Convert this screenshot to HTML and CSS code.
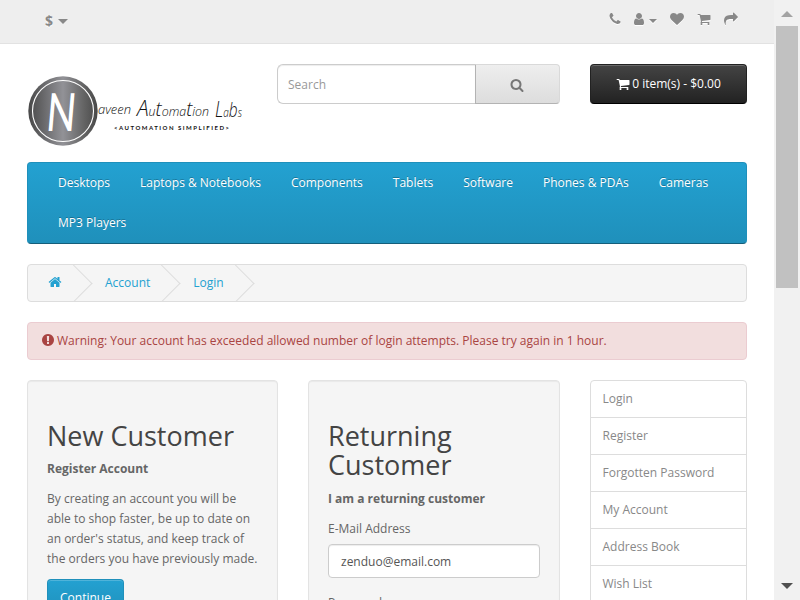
FILE: index.html
```html
<!DOCTYPE html>
<html lang="en">
<head>
<meta charset="utf-8">
<title>Account Login</title>
<link rel="stylesheet" href="styles.css">
</head>
<body>
<svg class="defs" aria-hidden="true">
  <symbol id="phone" viewBox="0 0 1792 1792"><path d="M1600 1240q0 27-10 70.5t-21 68.5q-21 50-122 106-94 51-186 51-27 0-53-3.5t-57.5-12.5-47-14.5-55.5-20.5-49-18q-98-35-175-83-127-79-264-216t-216-264q-48-77-83-175-3-9-18-49t-20.5-55.5-14.5-47-12.5-57.5-3.5-53q0-92 51-186 56-101 106-122 25-11 68.500-21t70.500-10q14 0 21 3 18 6 53 76 11 19 30 54t35 63.500 31 53.500q3 4 17.500 25t21.500 35.500 7 28.500q0 20-28.500 50t-62 55-62 53-28.500 46q0 9 5 22.500t8.500 20.500 14 24 11.500 19q76 137 174 235t235 174q2 1 19 11.500t24 14 20.500 8.500 22.500 5q18 0 46-28.500t53-62 55-62 50-28.500q14 0 28.500 7t35.500 21.500 25 17.500q25 15 53.500 31t63.500 35 54 30q70 35 76 53 3 7 3 21z"/></symbol>
  <symbol id="user" viewBox="0 0 1792 1792"><path d="M1536 1399q0 109-62.5 187t-150.5 78h-854q-88 0-150.5-78t-62.5-187q0-85 8.500-160.500t31.500-152 58.500-131 94-89 134.500-34.500q131 128 313 128t313-128q76 0 134.500 34.500t94 89 58.500 131 31.500 152 8.500 160.500zm-256-887q0 159-112.500 271.500t-271.500 112.500-271.500-112.500-112.500-271.500 112.500-271.500 271.500-112.500 271.500 112.500 112.500 271.500z"/></symbol>
  <symbol id="heart" viewBox="0 0 1792 1792"><path d="M896 1664q-26 0-44-18l-624-602q-10-8-27.500-26t-55.500-65.500-68-97.500-53.500-121-23.500-138q0-220 127-344t351-124q62 0 126.500 21.500t120 58 95.500 68.500 76 68q36-36 76-68t95.500-68.500 120-58 126.500-21.500q224 0 351 124t127 344q0 221-229 450l-623 600q-18 18-44 18z"/></symbol>
  <symbol id="cart" viewBox="0 0 1792 1792"><path d="M704 1536q0 52-38 90t-90 38-90-38-38-90 38-90 90-38 90 38 38 90zm896 0q0 52-38 90t-90 38-90-38-38-90 38-90 90-38 90 38 38 90zm128-1088v512q0 24-16.500 42.500t-40.500 21.500l-1044 122q13 60 13 70 0 16-24 64h920q26 0 45 19t19 45-19 45-45 19h-1024q-26 0-45-19t-19-45q0-11 8-31.500t16-36 21.500-40 15.500-29.500l-177-823h-204q-26 0-45-19t-19-45 19-45 45-19h256q16 0 28.500 6.500t19.500 15.500 13 24.500 8 26 5.500 29.500 4.500 26h1201q26 0 45 19t19 45z"/></symbol>
  <symbol id="share" viewBox="0 0 1792 1792"><path d="M1792 640q0 26-19 45l-512 512q-19 19-45 19t-45-19-19-45v-256h-224q-98 0-175.500 6t-154 21.500-133 42.500-105.500 69.500-80 101-48.500 138.500-17.500 181q0 55 5 123 0 6 2.500 23.500t2.500 26.500q0 15-8.500 25t-23.500 10q-16 0-28-17-7-9-13-22t-13.500-30-10.500-24q-127-285-127-451 0-199 53-333 162-403 875-403h224v-256q0-26 19-45t45-19 45 19l512 512q19 19 19 45z"/></symbol>
  <symbol id="search" viewBox="0 0 1792 1792"><path d="M1216 832q0-185-131.500-316.500t-316.500-131.500-316.500 131.500-131.500 316.500 131.500 316.500 316.500 131.500 316.500-131.500 131.500-316.500zm512 832q0 52-38 90t-90 38q-54 0-90-38l-343-342q-179 124-399 124-143 0-273.500-55.500t-225-150-150-225-55.500-273.500 55.500-273.500 150-225 225-150 273.500-55.500 273.500 55.500 225 150 150 225 55.500 273.500q0 220-124 399l343 343q37 37 37 90z"/></symbol>
  <symbol id="home" viewBox="0 0 1792 1792"><path d="M1472 992v480q0 26-19 45t-45 19h-384v-384h-256v384h-384q-26 0-45-19t-19-45v-480q0-1 .5-3t.5-3l575-474 575 474q1 2 1 6zm223-69l-62 74q-8 9-21 11h-3q-13 0-21-7l-692-577-692 577q-12 8-24 7-13-2-21-11l-62-74q-8-10-7-23.500t11-21.500l719-599q32-26 76-26t76 26l244 204v-195q0-14 9-23t23-9h192q14 0 23 9t9 23v408l219 182q10 8 11 21.500t-7 23.500z"/></symbol>
  <symbol id="alert" viewBox="0 0 1792 1792"><path d="M896 128q209 0 385.500 103t279.500 279.500 103 385.500-103 385.500-279.500 279.500-385.500 103-385.500-103-279.500-279.500-103-385.500 103-385.500 279.500-279.500 385.500-103zm128 1247v-190q0-14-9-23.500t-22-9.500h-192q-13 0-23 10t-10 23v190q0 13 10 23t23 10h192q13 0 22-9.500t9-23.500zm-2-344l18-621q0-12-10-18-10-8-24-8h-220q-14 0-24 8-10 6-10 18l18 621q0 10 10 17.500t24 7.500h185q14 0 23.500-7.500t10.500-17.500z"/></symbol>
</svg>
<div class="page">
  <nav class="top">
    <div class="currency"><strong>$</strong><i class="caret"></i></div>
    <ul class="links">
      <li><svg class="icon"><use href="#phone"/></svg></li>
      <li><svg class="icon"><use href="#user"/></svg><i class="caret small"></i></li>
      <li><svg class="icon"><use href="#heart"/></svg></li>
      <li><svg class="icon"><use href="#cart"/></svg></li>
      <li><svg class="icon"><use href="#share"/></svg></li>
    </ul>
  </nav>
  <header class="header">
    <svg class="logo" width="220" height="74" viewBox="0 0 220 74">
      <defs><linearGradient id="metal"><stop offset="0" stop-color="#484848"/><stop offset=".5" stop-color="#929297"/><stop offset=".8" stop-color="#646464"/><stop offset="1" stop-color="#484848"/></linearGradient></defs>
      <circle cx="36" cy="37" r="34.700" fill="url(#metal)"/>
      <circle cx="36" cy="37" r="30.500" fill="none" stroke="#fff" stroke-width="1.100"/>
      <text class="initial" transform="translate(18.500 56) skewX(-5)" textLength="29" lengthAdjust="spacingAndGlyphs">N</text>
      <g class="script">
        <text x="71" y="40" textLength="33" lengthAdjust="spacingAndGlyphs">aveen</text>
        <text x="110" y="42" textLength="72" lengthAdjust="spacingAndGlyphs"><tspan class="cap">A</tspan>u<tspan class="tall">t</tspan>oma<tspan class="tall">t</tspan>ion</text>
        <text x="188" y="43" textLength="27" lengthAdjust="spacingAndGlyphs"><tspan class="cap">L</tspan>a<tspan class="tall">b</tspan>s</text>
      </g>
      <text class="tagline" x="87" y="56" textLength="115">&lt;AUTOMATION SIMPLIFIED&gt;</text>
    </svg>
    <div class="search">
      <div class="field">Search</div>
      <div class="go"><svg class="icon"><use href="#search"/></svg></div>
    </div>
    <div class="basket"><svg class="icon"><use href="#cart"/></svg>0 item(s) - $0.00</div>
  </header>
  <nav class="menu">
    <a>Desktops</a><a>Laptops &amp; Notebooks</a><a>Components</a><a>Tablets</a><a>Software</a><a>Phones &amp; PDAs</a><a>Cameras</a><a>MP3 Players</a>
  </nav>
  <ul class="breadcrumb">
    <li><svg class="icon"><use href="#home"/></svg></li>
    <li>Account</li>
    <li>Login</li>
  </ul>
  <div class="warning"><svg class="icon"><use href="#alert"/></svg>Warning: Your account has exceeded allowed number of login attempts. Please try again in 1 hour.</div>
  <main class="columns">
    <section class="well">
      <h2>New Customer</h2>
      <p><strong>Register Account</strong></p>
      <p>By creating an account you will be able to shop faster, be up to date on an order's status, and keep track of the orders you have previously made.</p>
      <a class="button">Continue</a>
    </section>
    <section class="well">
      <h2>Returning Customer</h2>
      <p><strong>I am a returning customer</strong></p>
      <label>E-Mail Address</label>
      <div class="input">zenduo@email.com</div>
      <label>Password</label>
    </section>
    <aside class="list">
      <a>Login</a><a>Register</a><a>Forgotten Password</a><a>My Account</a><a>Address Book</a><a>Wish List</a>
    </aside>
  </main>
</div>
<div class="scrollbar"><i class="up"></i><i class="thumb"></i><i class="down"></i></div>
</body>
</html>
```
FILE: styles.css
```css
* { box-sizing: border-box; }
html, body { height: 600px; overflow: hidden; }
body {
  margin: 0;
  display: flex;
  background: #fff;
  color: #666;
  font: 12px/20px "Open Sans", sans-serif;
}
.defs { position: absolute; width: 0; height: 0; }
ul { list-style: none; margin: 0; padding: 0; }
.icon { width: 14px; height: 14px; fill: currentColor; flex: none; display: block; }
.page { width: 774px; height: 600px; overflow: hidden; flex: none; }

.top {
  height: 44px;
  padding: 0 36px 0 45px;
  display: flex;
  justify-content: space-between;
  background: #eee;
  border-bottom: 1px solid #e2e2e2;
  color: #888;
  text-shadow: 0 1px 0 #fff;
}
.currency { display: flex; align-items: center; height: 41px; gap: 6px; font-size: 14px; }
.caret { border: 4.500px solid transparent; border-top-color: #888; border-bottom: 0; margin-top: 1px; }
.currency .caret { border-width: 5px 5px 0; margin-left: -1px; }
.caret.small { border-width: 4px 4px 0; margin: 3px 0 0 3px; }
.links { display: flex; height: 38px; align-items: center; }
.links li { display: flex; align-items: center; margin-left: 13px; filter: drop-shadow(0 1px 0 #fff); }
.links li:nth-child(2) { margin-left: 10px; }

.header { display: flex; height: 98px; margin: 20px 27px 0; }
.logo { margin: 10px 30px 0 0; flex: none; }
.initial { font: 300 50px "Open Sans", sans-serif; fill: #fff; stroke: #fff; stroke-width: 2; }
.script { font: italic 300 13px "Open Sans", sans-serif; fill: #111; }
.script .cap { font-size: 22px; }
.script .tall { font-size: 20px; }
.tagline { font: 700 6px Lato, sans-serif; fill: #111; }
.search { display: flex; width: 283px; height: 40px; }
.field {
  width: 198px;
  padding: 10px 10px 8px;
  border: 1px solid #ccc;
  border-right: 0;
  border-radius: 6px 0 0 6px;
  box-shadow: inset 0 1px 1px rgba(0,0,0,.075);
  color: #999;
}
.go {
  flex: 1;
  display: flex;
  align-items: center;
  justify-content: center;
  padding: 2px 2px 0 0;
  border: 1px solid #ccc;
  border-color: #d9d9d9 #d9d9d9 #b3b3b3 #b3b3b3;
  border-radius: 0 4px 4px 0;
  background: linear-gradient(#eee, #ddd);
  color: #777;
}
.basket {
  width: 157px;
  height: 40px;
  margin-left: 30px;
  display: flex;
  align-items: center;
  justify-content: center;
  gap: 2px;
  border: 1px solid;
  border-color: #222 #222 #000;
  border-radius: 4px;
  background: linear-gradient(#444, #222);
  box-shadow: inset 0 1px 0 rgba(255,255,255,.2);
  color: #fff;
}

.menu {
  display: flex;
  flex-wrap: wrap;
  height: 82px;
  margin: 0 27px 20px;
  padding: 0 15px;
  border: 1px solid;
  border-color: #1f90bb #1f90bb #145e7a;
  border-radius: 4px;
  background: linear-gradient(#23a1d1, #1f90bb);
  color: #fff;
  text-shadow: 0 -1px 0 rgba(0,0,0,.25);
}
.menu a { padding: 10px 15px; height: 40px; }

.breadcrumb {
  display: flex;
  height: 38px;
  margin: 0 27px 20px;
  padding: 8px 0;
  overflow: hidden;
  border: 1px solid #ddd;
  border-radius: 4px;
  background: #f5f5f5;
  color: #23a1d1;
}
.breadcrumb li { position: relative; display: flex; align-items: center; padding: 0 20px; margin-right: 3px; }
.breadcrumb .icon { margin-bottom: 2px; }
.breadcrumb li::after {
  content: "";
  position: absolute;
  top: -3px;
  right: -5px;
  width: 26px;
  height: 26px;
  border-right: 1px solid #ddd;
  border-bottom: 1px solid #ddd;
  transform: rotate(-45deg);
}

.warning {
  display: flex;
  align-items: center;
  gap: 2px;
  height: 38px;
  margin: 0 27px 20px;
  padding: 0 13px;
  border: 1px solid #ebccd1;
  border-radius: 4px;
  background: #f2dede;
  color: #a94442;
}
.warning .icon { margin-bottom: 2px; }

.columns { display: grid; grid-template-columns: 251px 252px 157px; gap: 30px; margin: 0 27px; height: 300px; }
.well {
  padding: 19px;
  border: 1px solid #e3e3e3;
  border-radius: 4px;
  background: #f5f5f5;
  box-shadow: inset 0 1px 1px rgba(0,0,0,.05);
}
h2 { margin: 21px 0 9px; color: #444; font-size: 27px; font-weight: 400; line-height: 29.400px; }
p { margin: 0 0 10px; }
label { display: block; margin-bottom: 5px; }
.button {
  display: inline-block;
  padding: 7.500px 12px;
  border: 1px solid;
  border-color: #1f90bb #1f90bb #145e7a;
  border-radius: 4px;
  background: linear-gradient(#23a1d1, #1f90bb);
  box-shadow: inset 0 1px 0 rgba(255,255,255,.2);
  color: #fff;
}
.input {
  height: 34px;
  margin-bottom: 15px;
  padding: 7px 12px 5px;
  border: 1px solid #ccc;
  border-radius: 4px;
  background: #fff;
  box-shadow: inset 0 1px 1px rgba(0,0,0,.075);
  color: #555;
}
.list { border: 1px solid #ddd; border-radius: 4px 4px 0 0; }
.list a { display: block; height: 37px; padding: 8px 11.500px; border-bottom: 1px solid #ddd; color: #888; }

.scrollbar { display: flex; flex-direction: column; align-items: center; width: 26px; height: 600px; background: #f1f1f1; }
.up { margin-top: 11px; border: 6px solid transparent; border-top: 0; border-bottom-color: #a3a3a3; }
.thumb { width: 22px; height: 262px; margin-top: 9px; background: #c1c1c1; }
.down { margin: auto 0 11px; border: 6px solid transparent; border-bottom: 0; border-top-color: #505050; }
```
